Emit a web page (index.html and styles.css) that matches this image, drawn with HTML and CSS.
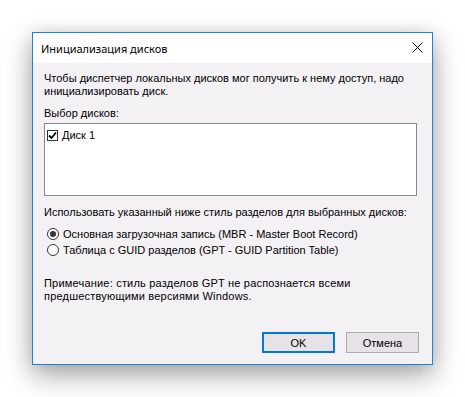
FILE: index.html
```html
<!DOCTYPE html>
<html lang="ru">
<head>
<meta charset="utf-8">
<title>Инициализация дисков</title>
<link rel="stylesheet" href="styles.css">
</head>
<body>
<div class="dialog">
  <div class="titlebar">
    <span class="title">Инициализация дисков</span>
    <svg class="close" width="11" height="11" viewBox="0 0 11 11"><path d="M0.5 0.5 L10.5 10.5 M10.5 0.5 L0.5 10.5" stroke="#000" stroke-width="1" fill="none"/></svg>
  </div>
  <div class="body">
    <p class="intro">Чтобы диспетчер локальных дисков мог получить к нему доступ, надо инициализировать диск.</p>
    <p class="label">Выбор дисков:</p>
    <div class="listbox">
      <div class="item">
        <span class="check"><svg width="9" height="9" viewBox="0 0 9 9"><path d="M1 4.5 L3.5 7 L8 1.5" stroke="#000" stroke-width="1.8" fill="none"/></svg></span>
        <span>Диск 1</span>
      </div>
    </div>
    <p class="label2">Использовать указанный ниже стиль разделов для выбранных дисков:</p>
    <div class="radios">
      <div class="radio-row"><span class="radio on"></span><span>Основная загрузочная запись (MBR - Master Boot Record)</span></div>
      <div class="radio-row"><span class="radio"></span><span>Таблица с GUID разделов (GPT - GUID Partition Table)</span></div>
    </div>
    <p class="note">Примечание: стиль разделов GPT не распознается всеми предшествующими версиями Windows.</p>
    <div class="buttons">
      <button class="btn default">OK</button>
      <button class="btn">Отмена</button>
    </div>
  </div>
</div>
</body>
</html>
```
FILE: styles.css
```css
html, body {
  margin: 0;
  padding: 0;
  background: #ffffff;
}
body {
  padding: 32px 0 0 32px;
  height: 397px;
  box-sizing: border-box;
  overflow: hidden;
}
.dialog {
  width: 401px;
  height: 333px;
  box-sizing: border-box;
  border: 1px solid #1a84d8;
  background: #f4f1f5;
  display: flex;
  flex-direction: column;
  box-shadow: 0 10px 26px rgba(0, 0, 0, 0.36), 0 0 14px rgba(0, 0, 0, 0.08);
}
.titlebar {
  height: 30px;
  background: #ffffff;
  display: flex;
  align-items: center;
  padding: 0 9px 0 8px;
  font-family: "Noto Sans", "Open Sans", sans-serif;
  font-size: 11px;
  color: #000;
}
.title {
  flex: 1;
}
.close {
  display: block;
  margin-top: -1px;
}
.body {
  flex: 1;
  display: flex;
  flex-direction: column;
  padding: 9px 13px 11px 11px;
  font-family: "Liberation Sans", Arial, sans-serif;
  font-size: 11px;
  line-height: 13px;
  color: #000;
}
p {
  margin: 0;
}
.intro {
  width: 365px;
}
.label {
  margin-top: 9px;
}
.listbox {
  margin-top: 3px;
  margin-right: 2px;
  height: 73px;
  box-sizing: border-box;
  border: 1px solid #828790;
  background: #ffffff;
  padding: 5px 0 0 2px;
}
.item {
  display: flex;
  align-items: center;
  gap: 4px;
  height: 13px;
}
.check {
  width: 11px;
  height: 11px;
  box-sizing: border-box;
  border: 1px solid #333;
  background: #fff;
  display: flex;
  align-items: center;
  justify-content: center;
}
.check svg {
  display: block;
}
.label2 {
  margin-top: 10px;
}
.radios {
  margin-top: 7px;
  padding-left: 3px;
}
.radio-row {
  display: flex;
  align-items: center;
  gap: 4px;
  height: 16px;
}
.radio {
  width: 12px;
  height: 12px;
  box-sizing: border-box;
  border: 1px solid #333;
  border-radius: 50%;
  background: #fff;
  display: flex;
  align-items: center;
  justify-content: center;
}
.radio.on::after {
  content: "";
  width: 6px;
  height: 6px;
  border-radius: 50%;
  background: #333;
}
.note {
  margin-top: 19px;
  width: 330px;
  letter-spacing: 0.2px;
}
.buttons {
  margin-top: auto;
  display: flex;
  justify-content: flex-end;
  gap: 11px;
}
.btn {
  width: 73px;
  height: 21px;
  box-sizing: border-box;
  border: 1px solid #adadad;
  background: #e6e3e7;
  font-family: "Liberation Sans", Arial, sans-serif;
  font-size: 11px;
  color: #000;
  padding: 0;
  margin: 0;
}
.btn.default {
  border: 2px solid #0078d7;
}
```
